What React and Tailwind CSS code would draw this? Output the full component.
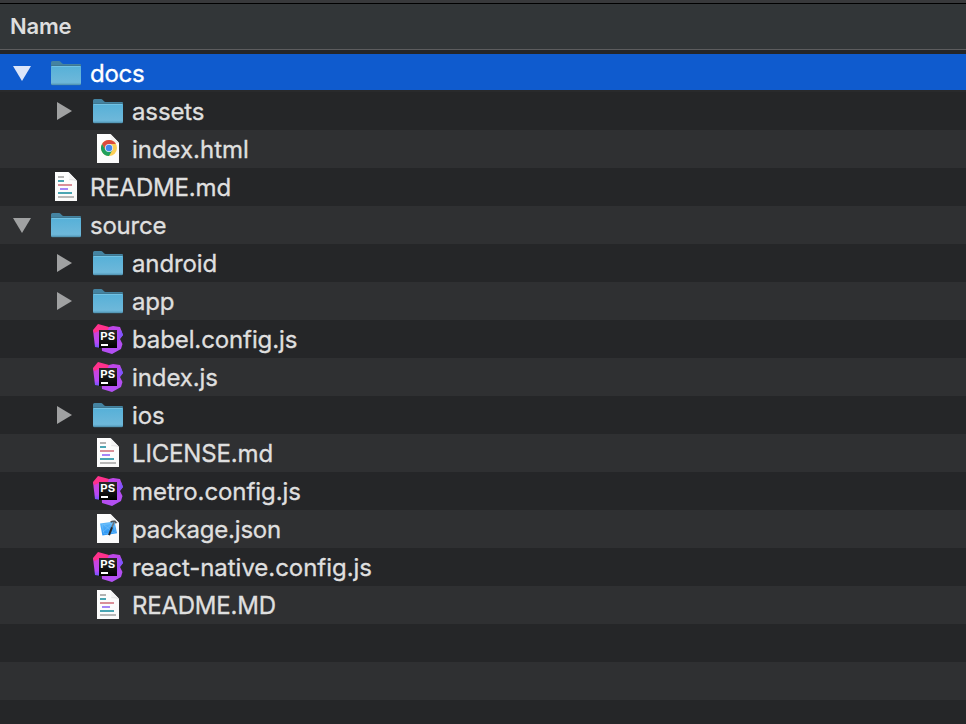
const ROWS = [
  { name: 'docs', icon: 'folder', level: 0, arrow: 'down', selected: true, track: 'tracking-[-0.3px]' },
  { name: 'assets', icon: 'folder', level: 1, arrow: 'right', track: 'tracking-[-0.12px]' },
  { name: 'index.html', icon: 'chrome', level: 1, track: 'tracking-[-0.03px]' },
  { name: 'README.md', icon: 'text', level: 0, track: 'tracking-[-0.17px]' },
  { name: 'source', icon: 'folder', level: 0, arrow: 'down', track: 'tracking-[-0.22px]' },
  { name: 'android', icon: 'folder', level: 1, arrow: 'right', track: 'tracking-[-0.12px]' },
  { name: 'app', icon: 'folder', level: 1, arrow: 'right', track: 'tracking-[-0.25px]' },
  { name: 'babel.config.js', icon: 'storm', level: 1, track: 'tracking-[-0.11px]' },
  { name: 'index.js', icon: 'storm', level: 1, track: 'tracking-[-0.1px]' },
  { name: 'ios', icon: 'folder', level: 1, arrow: 'right', track: 'tracking-[-0.15px]' },
  { name: 'LICENSE.md', icon: 'text', level: 1, track: 'tracking-[-0.15px]' },
  { name: 'metro.config.js', icon: 'storm', level: 1, track: 'tracking-[-0.07px]' },
  { name: 'package.json', icon: 'xcode', level: 1, track: 'tracking-[-0.2px]' },
  { name: 'react-native.config.js', icon: 'storm', level: 1, track: 'tracking-[-0.04px]' },
  { name: 'README.MD', icon: 'text', level: 1, track: 'tracking-[-0.22px]' },
  { name: '' },
  { name: '' },
  { name: '' },
];

function Gradients() {
  return (
    <svg className="absolute size-0" aria-hidden="true">
      <defs>
        <linearGradient id="folderFront" x1="0" y1="0" x2="0" y2="1">
          <stop offset="0" stopColor="#56b0d8" />
          <stop offset="1" stopColor="#71b9da" />
        </linearGradient>
        <linearGradient id="paper" x1="0" y1="0" x2="1" y2="1">
          <stop offset="0" stopColor="#ffffff" />
          <stop offset="1" stopColor="#f9f9f9" />
        </linearGradient>
        <linearGradient id="stormBody" x1="0" y1="0" x2="0.5" y2="1">
          <stop offset="0" stopColor="#c443e6" />
          <stop offset="1" stopColor="#b150f3" />
        </linearGradient>
        <linearGradient id="stormEdge" x1="0" y1="0" x2="1" y2="0.3">
          <stop offset="0.2" stopColor="#b74af7" />
          <stop offset="1" stopColor="#6b57ff" />
        </linearGradient>
        <linearGradient id="stormLeft" x1="0" y1="0" x2="0" y2="1">
          <stop offset="0" stopColor="#d33fd0" />
          <stop offset="0.7" stopColor="#b74af7" />
          <stop offset="1" stopColor="#6b57ff" />
        </linearGradient>
        <linearGradient id="stormBox" x1="0" y1="0" x2="0" y2="1">
          <stop offset="0" stopColor="#2a2a2a" />
          <stop offset="1" stopColor="#000000" />
        </linearGradient>
        <linearGradient id="blueprint" x1="0" y1="0" x2="0" y2="1">
          <stop offset="0" stopColor="#62baf8" />
          <stop offset="1" stopColor="#2391f5" />
        </linearGradient>
      </defs>
    </svg>
  );
}

function Folder() {
  return (
    <svg width="30" height="26" viewBox="0 0 30 26">
      <path d="M0 1.5Q0 0 1.5 0H8Q9 0 9.8 1L11 2.3Q11.6 2.9 12.5 2.9H29Q30 2.9 30 4V8H0Z" fill="#4483a1" />
      <path d="M0 5H30V23Q30 24.3 28.8 24.3H1.2Q0 24.3 0 23Z" fill="#397793" />
      <path d="M0 5H30V22.6Q30 23.6 29 23.6H1Q0 23.6 0 22.6Z" fill="url(#folderFront)" />
      <path d="M0 4.5H30" stroke="#3f7790" />
      <path d="M1 5.5H29" stroke="#72c2e4" />
      <path d="M0 22.4H30" stroke="#5da5c6" strokeWidth="0.8" />
    </svg>
  );
}

function Paper({ children }) {
  return (
    <svg width="22" height="29" viewBox="0 0 22 29">
      <path d="M0 0H13.5L22 8.8V29H0Z" fill="url(#paper)" />
      <path d="M13.5 0Q14.8 3 14.3 7.7Q19 7.5 22 8.8Z" fill="#f4f4f4" />
      <path d="M14.3 7.7Q19 7.5 22 8.8" stroke="#d4d4d4" strokeWidth="0.6" fill="none" />
      {children}
    </svg>
  );
}

function TextFile() {
  return (
    <Paper>
      <path d="M3 5H9" stroke="#b3b3b3" strokeWidth="2" />
      <path d="M3 9H9" stroke="#4aa5b3" strokeWidth="2" />
      <path d="M3 13H17" stroke="#d98f99" strokeWidth="2" />
      <path d="M5 17H13" stroke="#a585f7" strokeWidth="2" />
      <path d="M3 21H17" stroke="#4aa5b3" strokeWidth="2" />
      <path d="M3 25H19" stroke="#b8b8b8" strokeWidth="2" />
    </Paper>
  );
}

function ChromeFile() {
  return (
    <Paper>
      <g transform="translate(12 14)">
        <circle r="8" fill="#fbce55" />
        <path d="M-6.93 -4A8 8 0 0 1 6.93 -4L0 -4L-3.46 2Z" fill="#dc4b3e" />
        <path d="M-6.93 -4A8 8 0 0 0 0 8L3.46 2L-3.46 2Z" fill="#1fa05d" />
        <circle r="4" fill="#e4edf8" />
        <circle r="3.2" fill="#4388ee" />
      </g>
    </Paper>
  );
}

function XcodeFile() {
  return (
    <Paper>
      <path d="M3 9.5L17.6 7.4L20 19.3L5.4 21.5Z" fill="url(#blueprint)" />
      <path d="M5 10.8L16.5 9L18.4 18.2L7 20Z M6 18L15 10M7 11L16 18" fill="none" stroke="#8bd0fc" strokeWidth="0.4" />
      <path d="M17 8.2L14.6 14" stroke="#6d7277" strokeWidth="1.6" />
      <path d="M15 13.4L12 21.2" stroke="#23272b" strokeWidth="2" />
      <path d="M13.6 8.2Q15.5 6.8 18 7.4L19.4 9.2" stroke="#50565c" strokeWidth="1.6" fill="none" />
    </Paper>
  );
}

function StormFile() {
  return (
    <svg width="30" height="30" viewBox="0 0 30 30">
      <path d="M16 3L20 2L27 3L30 11L27 15L29.5 20L28 25L19 30L9 27L8 8Z" fill="url(#stormBody)" />
      <path d="M23 8L28 6L30 11L26.5 15L24 20Z" fill="url(#stormEdge)" />
      <path d="M0 6L8 7V24L2 23Z" fill="url(#stormLeft)" />
      <path d="M0 6L5 0L16 3L14 8L6 7L1 9Z" fill="#ff318c" />
      <rect x="6" y="6" width="18" height="18" fill="url(#stormBox)" />
      <text x="7.3" y="16" fill="#fff" fontSize="11" fontWeight="700" className="font-[Inter,sans-serif]" textLength="14.8" lengthAdjust="spacingAndGlyphs">PS</text>
      <rect x="8" y="20" width="7" height="2" fill="#fff" />
    </svg>
  );
}

const ICONS = { folder: Folder, text: TextFile, chrome: ChromeFile, xcode: XcodeFile, storm: StormFile };
const ICON_TOP = { folder: 'pt-[7px]', text: 'pt-1', chrome: 'pt-1', xcode: 'pt-1', storm: 'pt-1' };

function Arrow({ direction, selected }) {
  const fill = selected ? '#dce6f9' : '#a0a1a2';
  if (direction === 'down') {
    return (
      <svg width="18" height="15" className="mt-3">
        <path d="M0 0H18L9 15Z" fill={fill} />
      </svg>
    );
  }
  return (
    <svg width="15" height="18" className="mt-2.5">
      <path d="M0 0L15 9L0 18Z" fill={fill} />
    </svg>
  );
}

function Row({ row, index }) {
  const Icon = ICONS[row.icon];
  const stripe = index % 2 === 0 ? 'bg-[#2f3032]' : 'bg-[#252628]';
  const tone = row.selected ? 'bg-[#0f5bce] border-b-2 border-[#292a2c] text-white' : `${stripe} text-[#dfdfdf]`;
  return (
    <div className={`flex h-[38px] shrink-0 items-start ${tone} ${row.level === 1 ? 'pl-[42px]' : ''}`}>
      {Icon && (
        <>
          <div className="flex w-[46px] shrink-0 justify-center pr-0.5">
            {row.arrow && <Arrow direction={row.arrow} selected={row.selected} />}
          </div>
          <div className={`flex w-[40px] shrink-0 justify-center ${ICON_TOP[row.icon]}`}>
            <Icon />
          </div>
          <span className={`ml-1 whitespace-nowrap text-[24px] leading-[40px] [-webkit-text-stroke:0.35px_currentColor] ${row.track}`}>{row.name}</span>
        </>
      )}
    </div>
  );
}

export default function App() {
  return (
    <div className="flex h-[724px] w-[966px] flex-col overflow-hidden bg-[#252628] font-[Inter,'Liberation_Sans',sans-serif]">
      <Gradients />
      <div className="h-1 shrink-0 border-b border-black bg-[#38393b]" />
      <header className="mb-1 flex h-[46px] shrink-0 items-center border-b border-[#5c5c5d] bg-[#323638] pl-2.5 text-[22px] font-semibold tracking-[-0.2px] text-[#dedede]">
        Name
      </header>
      {ROWS.map((row, i) => (
        <Row key={i} row={row} index={i} />
      ))}
    </div>
  );
}
